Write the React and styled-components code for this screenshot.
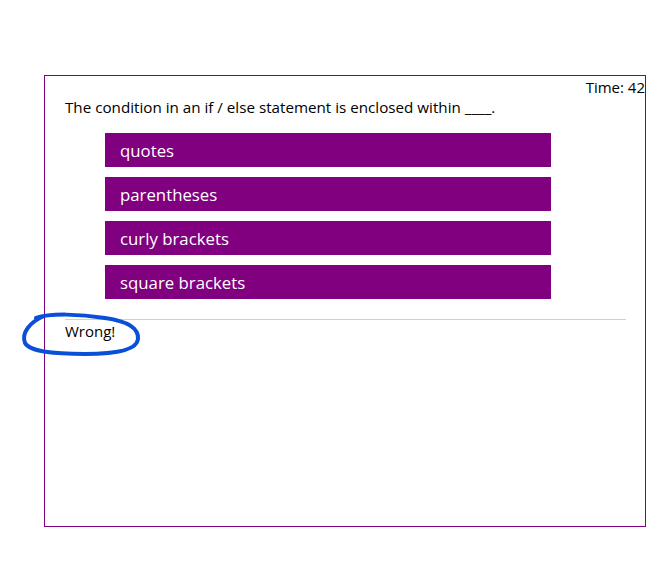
import React from 'react';
import styled, { createGlobalStyle } from 'styled-components';

const Global = createGlobalStyle`
  body {
    margin: 0;
    background: #fff;
    font-family: "Segoe UI", "Open Sans", "Liberation Sans", sans-serif;
  }
`;

const Page = styled.div`
  position: relative;
  width: 672px;
  height: 565px;
  padding: 75px 0 0 44px;
  box-sizing: border-box;
`;

const Quiz = styled.div`
  width: 602px;
  height: 452px;
  box-sizing: border-box;
  border: 1px solid #800080;
  display: flex;
  flex-direction: column;
`;

const Timer = styled.div`
  align-self: flex-end;
  font-size: 15px;
  line-height: 20px;
  padding-top: 1px;
  color: #000;
`;

const Question = styled.h2`
  margin: 0;
  padding: 0 20px;
  font-size: 15.2px;
  font-weight: 400;
  line-height: 20px;
  color: #000;
`;

const Choices = styled.div`
  display: flex;
  flex-direction: column;
  gap: 10px;
  margin: 16px 0 0 60px;
  width: 446px;
`;

const Choice = styled.button`
  height: 34px;
  border: none;
  background: #800080;
  color: #fff;
  text-align: left;
  padding: 0 15px;
  font-family: inherit;
  font-size: 16.8px;
  cursor: pointer;
`;

const Divider = styled.hr`
  margin: 20px 19px 0 20px;
  border: none;
  border-top: 1px solid #d0d0d0;
`;

const Feedback = styled.p`
  margin: 1px 0 0;
  padding: 0 20px;
  font-size: 15px;
  line-height: 20px;
  color: #000;
`;

const Scribble = styled.svg`
  position: absolute;
  left: 0;
  top: 0;
  pointer-events: none;
`;

const choices = ['quotes', 'parentheses', 'curly brackets', 'square brackets'];

export default function App() {
  return (
    <Page>
      <Global />
      <Quiz>
        <Timer>Time: 42</Timer>
        <Question>The condition in an if / else statement is enclosed within ____.</Question>
        <Choices>
          {choices.map((c) => (
            <Choice key={c}>{c}</Choice>
          ))}
        </Choices>
        <Divider />
        <Feedback>Wrong!</Feedback>
      </Quiz>
      <Scribble width="672" height="565" viewBox="0 0 672 565">
        <path
          d="M36 318 C 50 313, 80 314, 105 318 C 126 321, 139 328, 138 339 C 137 350, 115 354, 85 354 C 55 354, 30 352, 25 343 C 21 333, 30 322, 44 316"
          fill="none"
          stroke="#0a4fd8"
          strokeWidth="4"
          strokeLinecap="round"
        />
      </Scribble>
    </Page>
  );
}
